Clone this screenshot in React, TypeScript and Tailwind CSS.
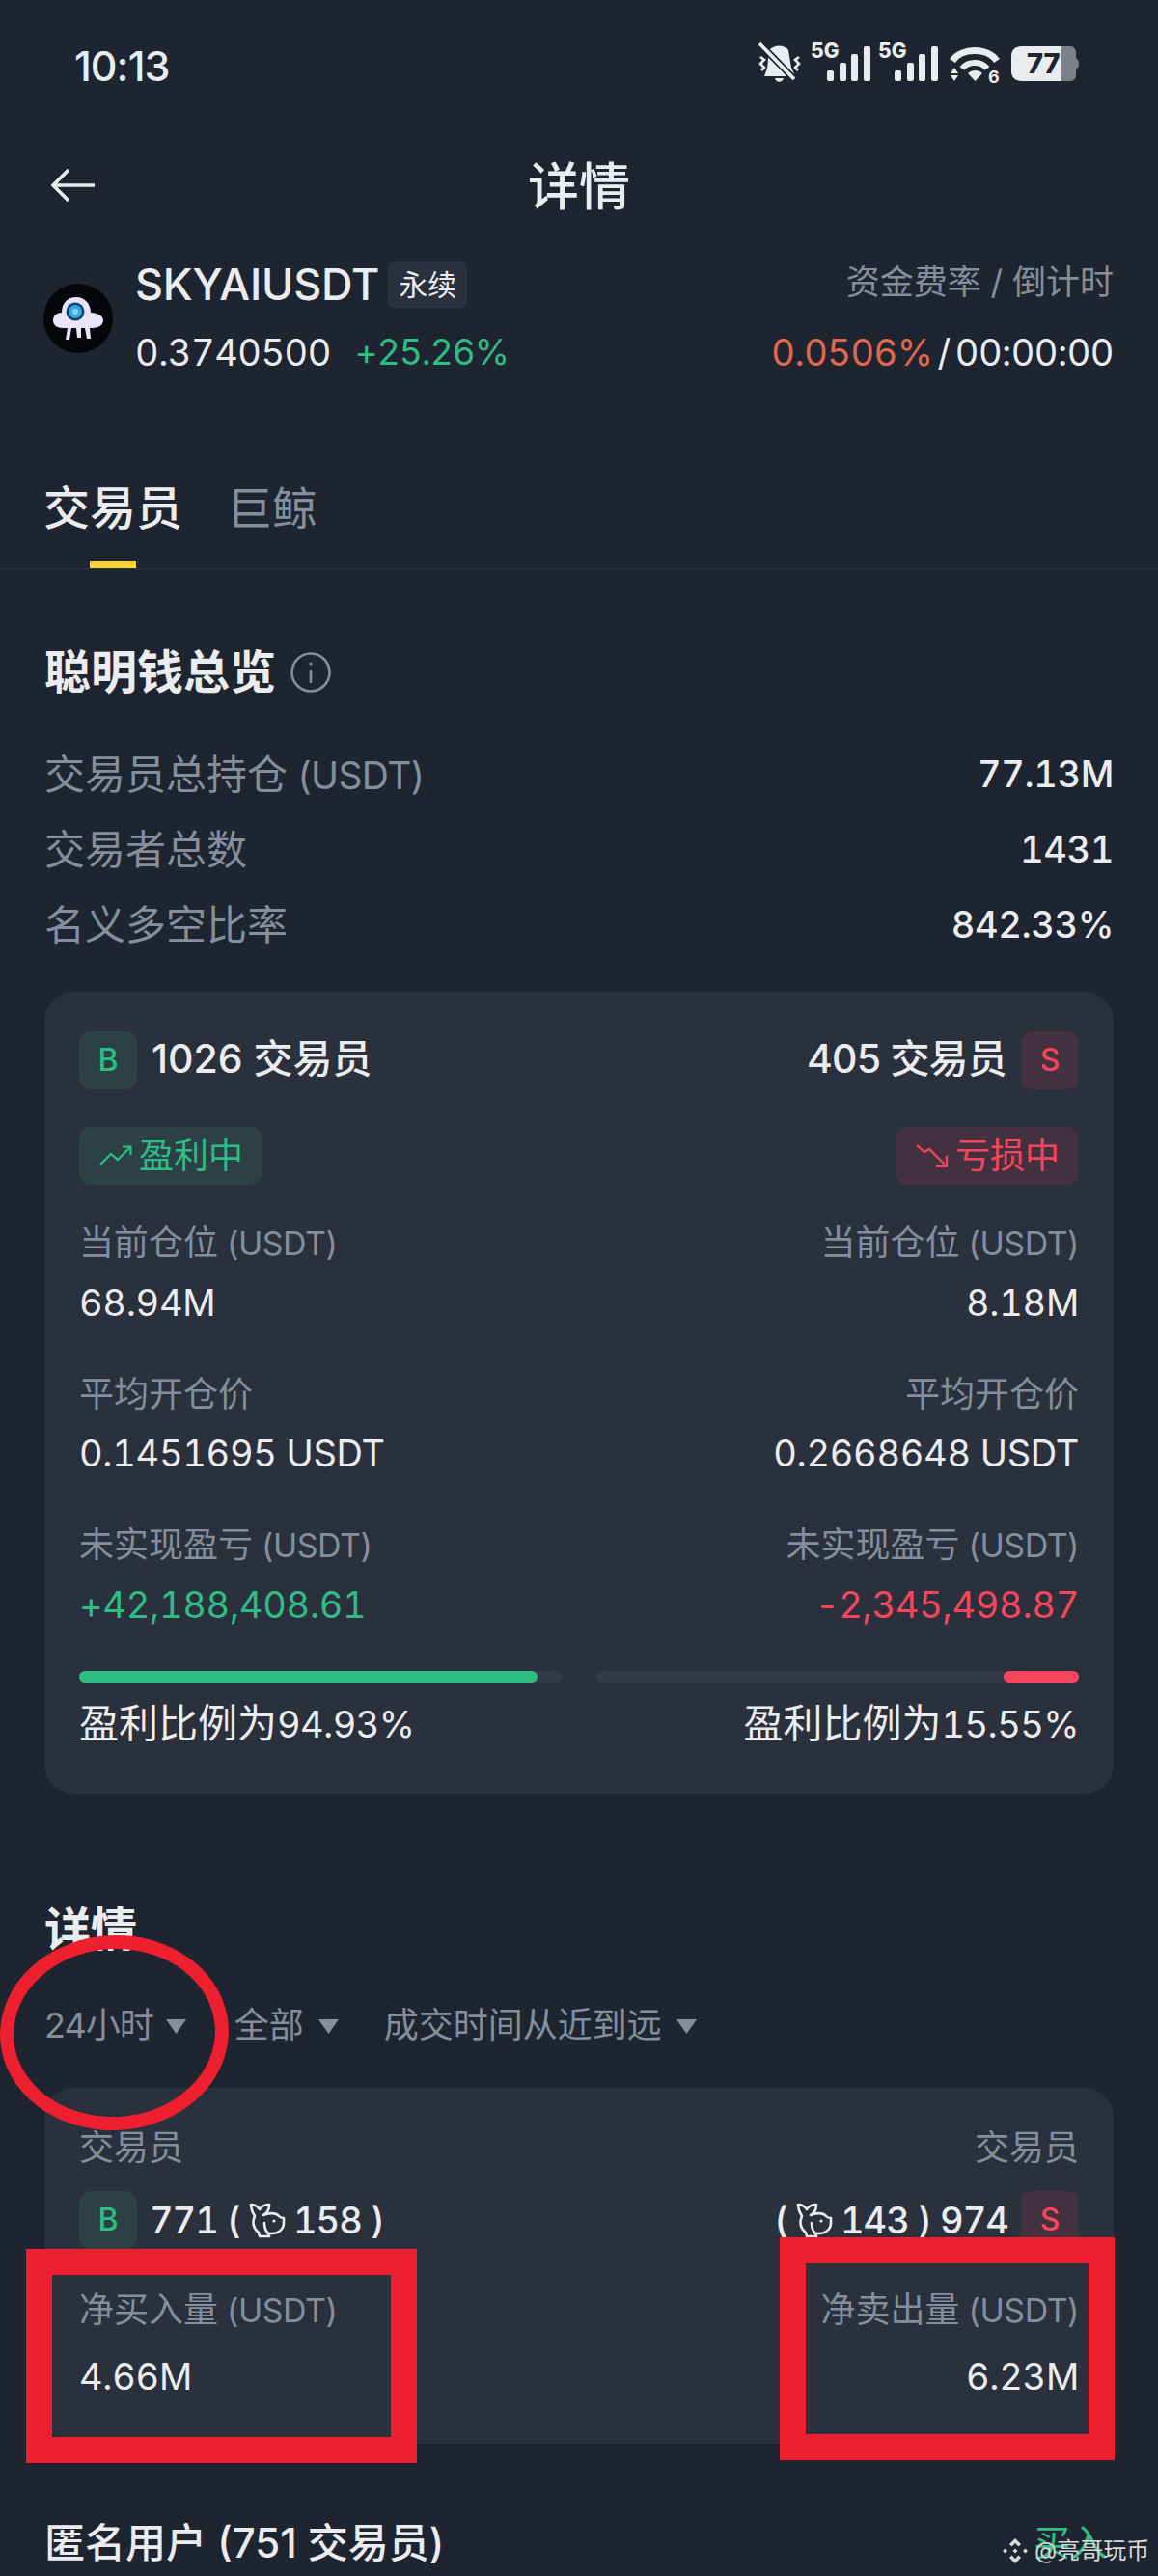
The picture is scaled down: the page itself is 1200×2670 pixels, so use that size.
import React from "react";

const Badge = ({ side }: { side: "B" | "S" }) => (
  <div
    className={`flex h-[60px] w-[60px] shrink-0 items-center justify-center rounded-[12px] text-[32px] font-medium ${
      side === "B" ? "bg-[#2b4145] text-[#2ebd85]" : "bg-[#443140] text-[#f6465d]"
    }`}
  >
    {side}
  </div>
);

const Whale = () => (
  <svg width="39" height="38" viewBox="0 0 39 38" fill="none" stroke="#eaecef" strokeWidth="2.6" strokeLinejoin="round" strokeLinecap="round">
    <path d="M3 3C6 3 10 5 12 8C14 5 18 3 22 3C22 8 20 12 16 14C20 12 28 11 31 14C33 16 33 17 37 17V22C37 29 31 33 25 33H21L22 36H12L11 32C6 28 4 22 7 15C5 12 3 8 3 3Z" />
    <path d="M17 22C17 26 18 30 21 33" />
    <circle cx="27" cy="20" r="1.6" fill="#eaecef" stroke="none" />
  </svg>
);

const Caret = () => (
  <svg width="21" height="15" viewBox="0 0 21 15" fill="#848e9c"><path d="M0 0H21L10.5 15Z" /></svg>
);

const Label = ({ children, unit }: { children: React.ReactNode; unit?: boolean }) => (
  <span className="leading-[48px] text-[#848e9c]">
    <span className="text-[36px]">{children}</span>
    {unit && <span className="text-[34px] tracking-[-0.5px]"> (USDT)</span>}
  </span>
);

const Pair = ({ l, r, mt = "" }: { l: React.ReactNode; r: React.ReactNode; mt?: string }) => (
  <div className={`flex h-[48px] items-center justify-between ${mt}`}>
    {l}
    {r}
  </div>
);

const Val = ({ children, c = "text-[#eaecef]" }: { children: React.ReactNode; c?: string }) => (
  <span className={`text-[38px] leading-[48px] tabular-nums tracking-[-0.3px] ${c}`}>{children}</span>
);

const StatusIcons = () => (
  <svg width="340" height="70" viewBox="0 -10 340 70" className="shrink-0">
    <g fill="#eaecef">
      {/* muted bell */}
      <path d="M15 9C20 3 31 3 35 9L38 27L42 36H10L13 28Z" />
      <path d="M21 38H30C29 43 22 43 21 38Z" />
      <path d="M6 16l4 3-4 4 4 4-3 3M46 16l-4 3 4 4-4 4 3 3" fill="none" stroke="#eaecef" strokeWidth="2.6" />
      <path d="M7 4L43 41" stroke="#1e2530" strokeWidth="7" />
      <path d="M5 2L41 39" stroke="#eaecef" strokeWidth="3.8" />
      <text x="58" y="17" fontSize="21" fontWeight="800">5G</text>
      <rect x="75" y="30" width="7" height="11" rx="2" />
      <rect x="88" y="22" width="7" height="19" rx="2" />
      <rect x="100" y="13" width="7" height="28" rx="2" />
      <rect x="113" y="5" width="7" height="36" rx="2" />
      <text x="128" y="17" fontSize="21" fontWeight="800">5G</text>
      <rect x="145" y="30" width="7" height="11" rx="2" />
      <rect x="158" y="22" width="7" height="19" rx="2" />
      <rect x="170" y="13" width="7" height="28" rx="2" />
      <rect x="183" y="5" width="7" height="36" rx="2" />
      {/* wifi */}
      <path d="M205 20C214 6 242 6 251 20" fill="none" stroke="#eaecef" strokeWidth="7" />
      <path d="M215 28C221 20 235 20 241 28" fill="none" stroke="#eaecef" strokeWidth="6" />
      <path d="M221 33C225 29 232 29 236 33L228.5 41Z" />
      <path d="M207 27L211 33H203ZM203 35H211L207 41Z" />
      <text x="242" y="43" fontSize="18" fontWeight="700">6</text>
      {/* battery */}
      <path d="M277 5H318V41H277C270 41 266 37 266 31V15C266 9 270 5 277 5Z" />
      <path d="M318 5H327C331 5 333 8 333 12V17C335 18 336 20 336 23C336 26 335 28 333 29V34C333 38 331 41 327 41H318Z" fill="#7c818a" />
      <text x="282" y="33" fontSize="29" fontWeight="800" fill="#1e2530">77</text>
    </g>
  </svg>
);

const Logo = () => (
  <svg width="72" height="72" viewBox="0 0 72 72" className="shrink-0">
    <circle cx="36" cy="36" r="36" fill="#05060a" />
    <path d="M10 38C10 33 14 30 19 30C19 20 25 14 34 14C43 14 49 21 49 30C55 30 62 33 62 38C62 43 57 46 50 46H48L49 57H45L43 46H39V56H35L34 46H29L27 58H23L25 46H20C14 46 10 43 10 38Z" fill="#e8e4fa" />
    <circle cx="33" cy="29" r="9.500" fill="#12406e" />
    <circle cx="33" cy="29" r="7" fill="#35a7d9" />
    <circle cx="33" cy="29" r="3" fill="#7fd3ef" />
  </svg>
);

const TrendUp = () => (
  <svg width="34" height="22" viewBox="0 0 34 22" fill="none" stroke="#2ebd85" strokeWidth="2.2" className="shrink-0">
    <path d="M1 20L12 9L19 15L32 2M24 1.500H32.500V10" />
  </svg>
);
const TrendDown = () => (
  <svg width="34" height="26" viewBox="0 0 34 26" fill="none" stroke="#f6465d" strokeWidth="2.2" className="shrink-0">
    <path d="M1 2L9 9L14 6L30 22M32 13V24H21" />
  </svg>
);

const Binance = () => (
  <svg width="28" height="28" viewBox="0 0 28 28" fill="#d8d8d8">
    <path d="M14 1L20 7L17.500 9.500L14 6L10.500 9.500L8 7ZM1 14L3.500 11.500L6 14L3.500 16.500ZM22 14L24.500 11.500L27 14L24.500 16.500ZM11.500 14L14 11.500L16.500 14L14 16.500ZM14 27L8 21L10.500 18.500L14 22L17.500 18.500L20 21Z" />
  </svg>
);

export default function App() {
  return (
    <div className="relative h-[2670px] w-[1200px] overflow-hidden bg-[#1e2530] font-['Inter','Noto_Sans_CJK_SC',sans-serif] text-[#eaecef]">
      {/* status bar */}
      <div className="flex h-[136px] items-center justify-between pl-[77px] pr-[78px]">
        <span className="text-[43px] font-medium tracking-[-1px]">10:13</span>
        <StatusIcons />
      </div>

      {/* header */}
      <div className="grid h-[112px] grid-cols-[1fr_auto_1fr] items-center px-[52px]">
        <svg width="46" height="36" viewBox="0 0 46 36" fill="none" stroke="#eaecef" strokeWidth="3.6">
          <path d="M46 18H3M19 2L3 18L19 34" />
        </svg>
        <span className="pt-[4px] text-[53px] font-medium leading-[60px]">详情</span>
        <span />
      </div>

      {/* market */}
      <div className="mt-[12px] flex h-[140px] items-center justify-between pl-[45px] pr-[46px]">
        <div className="flex items-center gap-[23px]">
          <Logo />
          <div className="flex flex-col">
            <div className="flex h-[70px] items-center gap-[9px]">
              <span className="text-[45px] font-medium tracking-[-0.2px]">SKYAIUSDT</span>
              <span className="rounded-[6px] bg-[#2a303c] px-[11px] py-[3px] text-[30px] leading-[42px]">永续</span>
            </div>
            <div className="flex h-[70px] items-center gap-[25px] text-[38px] tabular-nums tracking-[-0.5px]">
              <span>0.3740500</span>
              <span className="text-[37px] tracking-[-1px] text-[#2ebd85]">+25.26%</span>
            </div>
          </div>
        </div>
        <div className="flex flex-col items-end">
          <div className="flex h-[70px] items-center pb-[6px] text-[35px] text-[#848e9c]">资金费率 / 倒计时</div>
          <div className="flex h-[70px] items-center text-[38px] tabular-nums tracking-[-0.5px]">
            <span className="text-[#e2674f]">0.0506%</span>
            <span className="mx-[5px]">/</span>
            <span>00:00:00</span>
          </div>
        </div>
      </div>

      {/* tabs */}
      <div className="flex h-[190px] gap-[46px] border-b border-[#2a303c] pl-[45px] pt-[103px]">
        <div className="flex flex-col items-center">
          <span className="text-[48px] font-medium leading-[48px]">交易员</span>
          <span className="mt-[30px] h-[9px] w-[48px] bg-[#fcd535]" />
        </div>
        <span className="text-[47px] leading-[48px] text-[#848e9c]">巨鲸</span>
      </div>

      {/* overview */}
      <div className="px-[46px]">
        <div className="mt-[83px] flex h-[48px] items-center gap-[15px]">
          <span className="text-[48px] font-bold leading-[48px]">聪明钱总览</span>
          <svg width="42" height="42" viewBox="0 0 42 42" fill="none" stroke="#848e9c" strokeWidth="2.6">
            <circle cx="21" cy="21" r="19.500" />
            <path d="M21 18V32" />
            <circle cx="21" cy="12" r="1.600" fill="#848e9c" stroke="none" />
          </svg>
        </div>

        <div className="mt-[42px] flex flex-col">
          {[
            ["交易员总持仓", " (USDT)", "77.13M"],
            ["交易者总数", "", "1431"],
            ["名义多空比率", "", "842.33%"],
          ].map(([a, u, b]) => (
            <div key={a} className="flex h-[78px] items-center justify-between">
              <span className="text-[#848e9c]">
                <span className="text-[42px]">{a}</span>
                <span className="text-[39px] tracking-[-0.6px]">{u}</span>
              </span>
              <span className="text-[38px] font-medium tabular-nums tracking-[-0.4px]">{b}</span>
            </div>
          ))}
        </div>

        {/* card 1 */}
        <div className="mt-[31px] h-[831px] rounded-[30px] bg-[#2a303c] px-[36px] pt-[41px]">
          <div className="flex h-[60px] items-center justify-between">
            <div className="flex items-center gap-[15px]">
              <Badge side="B" />
              <span className="pb-[2px] text-[41px] font-medium">1026 交易员</span>
            </div>
            <div className="flex items-center gap-[15px]">
              <span className="pb-[2px] text-[41px] font-medium tracking-[-0.8px]">405 交易员</span>
              <Badge side="S" />
            </div>
          </div>
          <div className="mt-[39px] flex h-[60px] items-center justify-between">
            <div className="flex h-[60px] items-center gap-[7px] rounded-[12px] bg-[#2b4145] pl-[21px] pr-[20px] text-[36px] text-[#2ebd85]">
              <TrendUp />
              盈利中
            </div>
            <div className="flex h-[60px] items-center gap-[7px] rounded-[12px] bg-[#443140] pl-[21px] pr-[20px] text-[36px] text-[#f6465d]">
              <TrendDown />
              亏损中
            </div>
          </div>
          <Pair mt="mt-[39px]" l={<Label unit>当前仓位</Label>} r={<Label unit>当前仓位</Label>} />
          <Pair mt="mt-[11px]" l={<Val>68.94M</Val>} r={<Val>8.18M</Val>} />
          <Pair mt="mt-[50px]" l={<Label>平均开仓价</Label>} r={<Label>平均开仓价</Label>} />
          <Pair mt="mt-[10px]" l={<Val>0.1451695 USDT</Val>} r={<Val>0.2668648 USDT</Val>} />
          <Pair mt="mt-[50px]" l={<Label unit>未实现盈亏</Label>} r={<Label unit>未实现盈亏</Label>} />
          <Pair
            mt="mt-[11px]"
            l={<Val c="text-[#2ebd85]">+42,188,408.61</Val>}
            r={<Val c="text-[#f6465d]">-2,345,498.87</Val>}
          />
          <div className="mt-[45px] grid grid-cols-2 gap-[36px]">
            <div className="h-[12px] rounded-full bg-[#323a45]">
              <div className="h-full w-[95%] rounded-full bg-[#2ebd85]" />
            </div>
            <div className="flex h-[12px] justify-end rounded-full bg-[#323a45]">
              <div className="h-full w-[15.55%] rounded-full bg-[#f6465d]" />
            </div>
          </div>
          <Pair
            mt="mt-[19px]"
            l={<span className="text-[41px]">盈利比例为<span className="text-[38px] tabular-nums tracking-[-0.6px]">94.93%</span></span>}
            r={<span className="text-[41px]">盈利比例为<span className="text-[38px] tabular-nums tracking-[-0.6px]">15.55%</span></span>}
          />
        </div>

        {/* details */}
        <div className="mt-[117px] h-[48px] text-[48px] font-bold leading-[48px]">详情</div>
        <div className="mt-[51px] flex h-[48px] items-center text-[36px] text-[#848e9c]">
          <span className="tracking-[-1px]">24小时</span>
          <span className="ml-[13px] pt-[3px]"><Caret /></span>
          <span className="ml-[50px]">全部</span>
          <span className="ml-[15px] pt-[3px]"><Caret /></span>
          <span className="ml-[47px]">成交时间从近到远</span>
          <span className="ml-[15px] pt-[3px]"><Caret /></span>
        </div>

        {/* card 2 */}
        <div className="mt-[41px] h-[369px] rounded-[30px] bg-[#2a303c] px-[36px] pt-[43px]">
          <div className="flex h-[44px] items-center justify-between">
            <Label>交易员</Label>
            <Label>交易员</Label>
          </div>
          <div className="mt-[20px] flex h-[60px] items-center justify-between">
            <div className="flex items-center gap-[13px]">
              <Badge side="B" />
              <span className="flex items-center gap-[8px] text-[38px] font-medium tabular-nums tracking-[-1px]">
                771 ( <Whale /> 158 )
              </span>
            </div>
            <div className="flex items-center gap-[13px]">
              <span className="flex items-center gap-[8px] text-[38px] font-medium tabular-nums tracking-[-1px]">
                ( <Whale /> 143 ) 974
              </span>
              <Badge side="S" />
            </div>
          </div>
          <Pair mt="mt-[42px]" l={<Label unit>净买入量</Label>} r={<Label unit>净卖出量</Label>} />
          <Pair mt="mt-[18px]" l={<Val>4.66M</Val>} r={<Val>6.23M</Val>} />
        </div>

        {/* next row */}
        <div className="mt-[78px] flex h-[48px] items-center justify-between">
          <span className="text-[42px] font-medium">匿名用户 (751 交易员)</span>
          <span className="mr-[7px] text-[38px] text-[#2ebd85]">买入</span>
        </div>
      </div>

      {/* annotations */}
      <div className="absolute left-0 top-[2006px] h-[202px] w-[237px] -rotate-[3deg] rounded-[50%] border-[14px] border-[#ee1f2e]" />
      <div className="absolute left-[27px] top-[2331px] h-[222px] w-[405px] border-[27px] border-[#ee1f2e]" />
      <div className="absolute left-[808px] top-[2319px] h-[231px] w-[347px] border-[27px] border-[#ee1f2e]" />

      {/* watermark */}
      <div className="absolute left-[1038px] top-[2626px] flex items-center gap-[6px] text-[24px] text-[#d8d8d8]">
        <Binance />
        <span>@亮哥玩币</span>
      </div>
    </div>
  );
}
